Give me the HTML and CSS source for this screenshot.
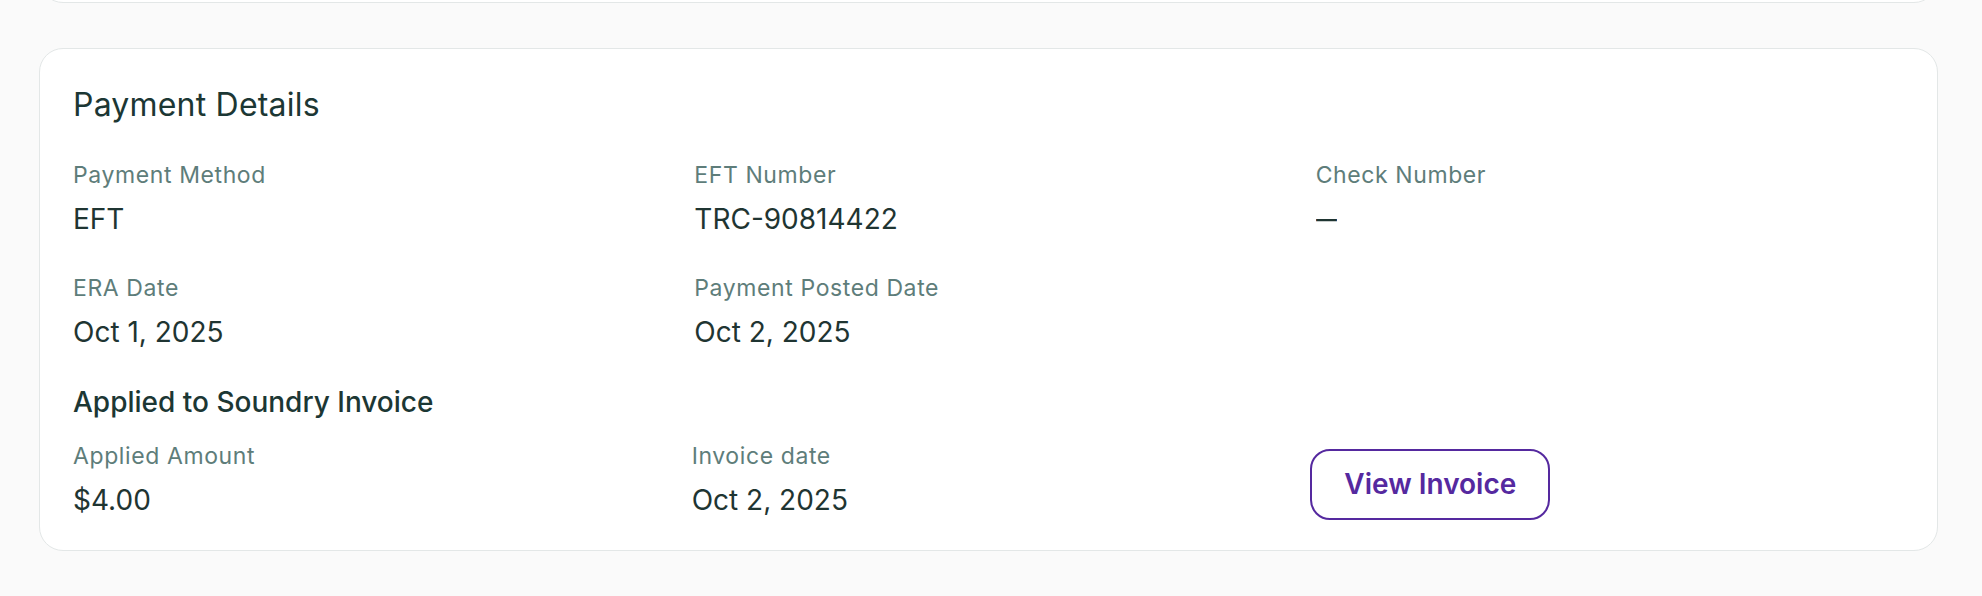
FILE: index.html
```html
<!DOCTYPE html>
<html lang="en">
<head>
<meta charset="utf-8">
<title>Payment Details</title>
<link rel="stylesheet" href="styles.css">
</head>
<body>
<div class="page">
  <div class="prev-card"></div>
  <section class="card">
    <h2 class="card-title">Payment Details</h2>
    <div class="grid">
      <div class="field">
        <div class="label">Payment Method</div>
        <div class="value">EFT</div>
      </div>
      <div class="field">
        <div class="label">EFT Number</div>
        <div class="value">TRC-90814422</div>
      </div>
      <div class="field">
        <div class="label">Check Number</div>
        <div class="value"><span class="dash">—</span></div>
      </div>
      <div class="field">
        <div class="label">ERA Date</div>
        <div class="value">Oct 1, 2025</div>
      </div>
      <div class="field">
        <div class="label">Payment Posted Date</div>
        <div class="value">Oct 2, 2025</div>
      </div>
    </div>
    <h3 class="subtitle">Applied to Soundry Invoice</h3>
    <div class="grid invoice-grid">
      <div class="field">
        <div class="label">Applied Amount</div>
        <div class="value">$4.00</div>
      </div>
      <div class="field">
        <div class="label">Invoice date</div>
        <div class="value">Oct 2, 2025</div>
      </div>
      <div class="action">
        <button class="btn-outline" type="button">View Invoice</button>
      </div>
    </div>
  </section>
</div>
</body>
</html>
```
FILE: styles.css
```css
* { box-sizing: border-box; }
html, body {
  margin: 0;
  padding: 0;
  background: #fafafa;
  font-family: Inter, "Noto Sans", sans-serif;
  color: #1e3532;
}
.page {
  padding: 0 44px 0 39px;
  overflow: hidden;
  height: 596px;
}
.prev-card {
  height: 100px;
  margin-top: -97px;
  background: #ffffff;
  border: 1px solid #e3e7e7;
  border-radius: 24px;
}
.card {
  margin-top: 45px;
  background: #ffffff;
  border: 1px solid #e3e7e7;
  border-radius: 24px;
  padding: 32px 32px 30px 33px;
}
.card-title {
  margin: 0;
  font-size: 32px;
  line-height: 48px;
  font-weight: 400;
  color: #1c3734;
  letter-spacing: 0.2px;
}
.grid {
  display: grid;
  grid-template-columns: 1fr 1fr 1fr;
  column-gap: 32px;
  row-gap: 33px;
  margin-top: 30px;
}
.field {
  display: flex;
  flex-direction: column;
  gap: 8px;
}
.label {
  font-size: 23px;
  line-height: 32px;
  color: #5e7d7a;
  letter-spacing: 0.6px;
}
.value {
  font-size: 28px;
  line-height: 40px;
  color: #1f3532;
}
.dash {
  display: inline-block;
  transform: scaleX(0.75);
  transform-origin: left center;
}
.subtitle {
  margin: 30px 0 0;
  font-size: 28px;
  line-height: 40px;
  font-weight: 500;
  color: #1c3734;
}
.invoice-grid {
  margin-top: 18px;
  column-gap: 24px;
}
.action {
  display: flex;
  align-items: flex-end;
}
.btn-outline {
  font-family: inherit;
  font-size: 28px;
  line-height: 39px;
  font-weight: 600;
  color: #55299f;
  background: #ffffff;
  border: 2px solid #55299f;
  border-radius: 20px;
  padding: 14px 32px;
  cursor: pointer;
}
```
